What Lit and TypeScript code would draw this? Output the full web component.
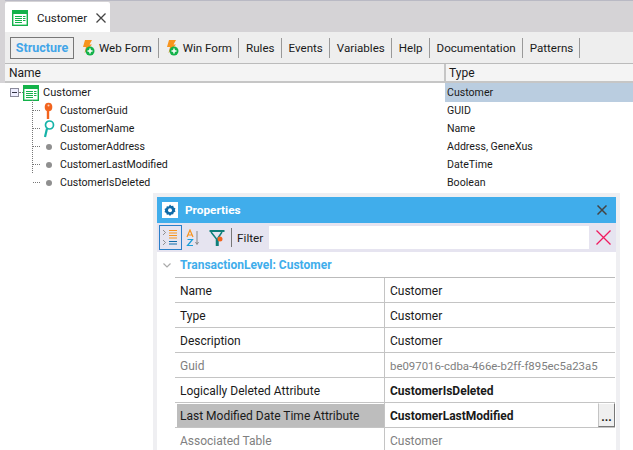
import { LitElement, html, css, svg } from 'lit';
import { customElement } from 'lit/decorators.js';

const tabs = ['Web Form', 'Win Form', 'Rules', 'Events', 'Variables', 'Help', 'Documentation', 'Patterns'];

const attrs = [
  { name: 'CustomerGuid', type: 'GUID', icon: 'pk' },
  { name: 'CustomerName', type: 'Name', icon: 'sk' },
  { name: 'CustomerAddress', type: 'Address, GeneXus', icon: 'dot' },
  { name: 'CustomerLastModified', type: 'DateTime', icon: 'dot' },
  { name: 'CustomerIsDeleted', type: 'Boolean', icon: 'dot' },
];

const props = [
  { name: 'Name', value: 'Customer' },
  { name: 'Type', value: 'Customer' },
  { name: 'Description', value: 'Customer' },
  { name: 'Guid', value: 'be097016-cdba-466e-b2ff-f895ec5a23a5', off: true, guid: true },
  { name: 'Logically Deleted Attribute', value: 'CustomerIsDeleted', bold: true },
  { name: 'Last Modified Date Time Attribute', value: 'CustomerLastModified', bold: true, selected: true },
  { name: 'Associated Table', value: 'Customer', off: true },
];

const trnIcon = html`<svg width="16" height="16" viewBox="0 0 16 16">
  <rect x="0.700" y="0.700" width="14.600" height="14.600" fill="#fff" stroke="#13b24a" stroke-width="1.400"/>
  <rect x="1" y="1" width="14" height="3" fill="#13b24a"/>
  <path d="M3 6.500h7M3 8.500h7M3 10.500h7M3 12.500h7" stroke="#13b24a"/>
  <path d="M11 6.500h2.500M11 8.500h2.500M11 10.500h2.500" stroke="#13b24a"/>
</svg>`;

const boltIcon = html`<svg width="13" height="17" viewBox="0 0 13 17">
  <path d="M3 1h7L7.500 5.500H10L2.500 14 4 8H1z" fill="#f7941d"/>
  <circle cx="8" cy="12" r="4.500" fill="#13b24a"/>
  <path d="M5.500 12h5M8 9.500v5" stroke="#fff" stroke-width="1.500"/>
</svg>`;

const keyIcon = (kind: string) => {
  if (kind === 'pk') {
    return html`<svg width="12" height="18" viewBox="0 0 12 18">
      <ellipse cx="5.500" cy="5" rx="3.800" ry="4.300" fill="#f2641e"/>
      <path d="M5 8v9" stroke="#f2641e" stroke-width="2.400"/>
      <circle cx="5.500" cy="3.500" r="1" fill="#fbd0b8"/>
    </svg>`;
  }
  if (kind === 'sk') {
    return html`<svg width="12" height="18" viewBox="0 0 12 18">
      <circle cx="6.500" cy="5" r="4" fill="none" stroke="#15b3a8" stroke-width="1.700"/>
      <path d="M4 8.500 2 17" stroke="#15b3a8" stroke-width="2.200"/>
    </svg>`;
  }
  return html`<svg width="12" height="18" viewBox="0 0 12 18"><circle cx="6" cy="9" r="3" fill="#8f8f8f"/></svg>`;
};

const gearIcon = html`<svg width="16" height="16" viewBox="0 0 16 16">
  <rect width="16" height="16" fill="#fff"/>
  <path d="M8 2.500 9.300 4l1.900-.3.500 1.900 1.800.8-.7 1.600.7 1.600-1.800.8-.5 1.900L9.300 12.500 8 14l-1.300-1.500-1.900.3-.5-1.900-1.800-.8.7-1.600-.7-1.600 1.800-.8.5-1.900 1.900.3z" fill="#0f6ba8"/>
  <circle cx="8" cy="8.200" r="2" fill="#fff"/>
</svg>`;

const lines = svg`<path d="M7 2.500h8M7 5h8M7 7.500h8M7 10h8" stroke="#f7941d" stroke-width="1.200"/>
  <path d="M7 13.500h8M7 16h8" stroke="#0f6ba8" stroke-width="1.200"/>
  <path d="M1 2l2.500 2.500L1 7M1 12l2.500 2.500L1 17" fill="none" stroke="#777" stroke-width="0.800"/>`;

@customElement('app-root')
export class AppRoot extends LitElement {
  static styles = css`
    :host {
      display: block;
      width: 633px;
      height: 450px;
      overflow: hidden;
      position: relative;
      background: #fff;
      font-family: Roboto, 'Open Sans', sans-serif;
      font-size: 10.600px;
      color: #1a1a1a;
    }
    .top {
      background: #d5d3d6;
      padding-left: 5px;
      height: 83px;
    }
    .tabstrip {
      height: 32px;
      box-sizing: border-box;
      padding-top: 1px;
      border-top: 1px solid #b9b9c4;
    }
    .tab {
      width: 105px;
      height: 30px;
      background: #fff;
      border-radius: 2px 2px 0 0;
      display: flex;
      align-items: center;
      padding: 2px 0 0 7px;
      box-sizing: border-box;
      font-size: 11.500px;
    }
    .tab span { margin: 0 9px 0 9px; }
    .toolbar {
      height: 31px;
      background: #eee;
      display: flex;
      align-items: center;
      box-sizing: border-box;
      padding-left: 5px;
      font-size: 11.600px;
    }
    .structure {
      border: 1px solid #777;
      color: #42a5e8;
      font-weight: 700;
      font-size: 12.500px;
      height: 22px;
      line-height: 20px;
      box-sizing: border-box;
      width: 64px;
      text-align: center;
      margin-right: 8px;
    }
    .tb {
      display: flex;
      align-items: center;
      gap: 4px;
      height: 20px;
      padding-right: 6px;
      margin-right: 7px;
      border-right: 1px solid #999;
      white-space: nowrap;
    }
    .head {
      height: 17px;
      display: grid;
      grid-template-columns: 439px 1fr;
      background: #f4f4f4;
      border-top: 1px solid #bbb;
      border-bottom: 2px solid #c6c6c6;
      line-height: 18px;
      font-size: 12px;
    }
    .head div { padding-left: 4px; }
    .head div + div { border-left: 2px solid #c6c6c6; padding-left: 3px; }
    .tree { position: relative; }
    .row {
      height: 18px;
      display: grid;
      grid-template-columns: 445px 1fr;
      line-height: 19px;
    }
    .row .left { display: flex; align-items: center; }
    .row .type { padding-left: 2px; }
    .root .type { background: #bacde0; }
    .root .left { padding-left: 10px; }
    .expander {
      width: 9px;
      height: 9px;
      border: 1px solid #8a8a9a;
      background: #eef;
      box-sizing: border-box;
      display: flex;
      align-items: center;
      justify-content: center;
    }
    .expander::after { content: ''; width: 5px; height: 1px; background: #334; }
    .hdots { width: 4px; border-top: 1px dotted #777; }
    .root .name { margin-left: 4px; font-size: 11px; }
    .child .left { padding-left: 33px; }
    .child .hdots { width: 7px; }
    .child .icon { display: flex; margin-left: 3px; }
    .child .name { margin-left: 5px; }
    .vline {
      position: absolute;
      left: 32px;
      top: 17px;
      height: 73px;
      border-left: 1px dotted #777;
    }
    .panel {
      position: absolute;
      left: 153px;
      top: 193px;
      width: 467px;
      height: 257px;
      box-sizing: border-box;
      padding: 4px 4px 0;
      background: #efeff2;
    }
    .inner {
      height: 253px;
      background: #fff;
    }
    .title {
      height: 26px;
      background: #40adeb;
      color: #fff;
      display: flex;
      align-items: center;
      padding: 0 9px 0 5px;
      gap: 7px;
      font-weight: 700;
      font-size: 11.800px;
    }
    .title .close { margin-left: auto; display: flex; }
    .filterbar {
      height: 29px;
      background: #e6e4f0;
      display: flex;
      align-items: center;
      box-sizing: border-box;
      padding-left: 2px;
      font-size: 11.800px;
    }
    .sortbtn {
      width: 23px;
      height: 25px;
      box-sizing: border-box;
      border: 1px solid #2a7fc9;
      display: flex;
      align-items: center;
      justify-content: center;
    }
    .sep { width: 1px; height: 19px; background: #777; margin: 0 5px 0 6px; }
    .filterinput { flex: 1; height: 23px; background: #fff; margin-left: 6px; }
    .filterbar .clear { display: flex; margin: 0 5px 0 7px; }
    .filterbar .az { display: flex; margin-left: 4px; }
    .filterbar .fn { display: flex; margin-left: 7px; }
    .group {
      height: 25px;
      display: flex;
      align-items: center;
      gap: 9px;
      padding: 1px 0 0 6px;
      box-sizing: border-box;
      color: #40adeb;
      font-weight: 700;
      font-size: 12px;
    }
    .grid { margin-left: 18px; margin-right: 1px; border-top: 1px solid #bbb; }
    .prop {
      display: grid;
      grid-template-columns: 209px 1fr;
      height: 25px;
      box-sizing: border-box;
      border-bottom: 1px solid #c4c4c4;
      line-height: 26px;
      font-size: 12px;
      position: relative;
    }
    .prop > div { padding-left: 5px; }
    .prop > div + div { border-left: 1px solid #c4c4c4; padding-left: 5px; }
    .prop.off { color: #808080; }
    .prop.guid .val { font-size: 11.400px; }
    .prop.bold .val { font-weight: 700; }
    .prop.sel .lbl { background: #bdbdbd; margin: 1px 0 0 2px; padding-left: 3px; height: 23px; line-height: 24px; }
    .dots {
      position: absolute;
      right: 0;
      top: 0;
      width: 17px;
      height: 24px;
      background: #efefef;
      border: 1px solid #fff;
      border-right-color: #777;
      border-bottom-color: #777;
      box-sizing: border-box;
      font-weight: 700;
      text-align: center;
      line-height: 26px;
      padding: 0 !important;
    }
  `;

  render() {
    return html`
      <div class="top">
        <div class="tabstrip">
          <div class="tab">
            ${trnIcon}
            <span>Customer</span>
            <svg width="10" height="10" viewBox="0 0 10 10"><path d="M0.500 0.500l9 9M9.500 0.500l-9 9" stroke="#444" stroke-width="1.300"/></svg>
          </div>
        </div>
        <div class="toolbar">
          <div class="structure">Structure</div>
          ${tabs.map((t, i) => html`<div class="tb">${i < 2 ? boltIcon : ''}<span>${t}</span></div>`)}
        </div>
        <div class="head"><div>Name</div><div>Type</div></div>
      </div>
      <div class="tree">
        <div class="vline"></div>
        <div class="row root">
          <div class="left">
            <div class="expander"></div><div class="hdots"></div>${trnIcon}<span class="name">Customer</span>
          </div>
          <div class="type">Customer</div>
        </div>
        ${attrs.map(
          (a) => html`<div class="row child">
            <div class="left">
              <div class="hdots"></div><div class="icon">${keyIcon(a.icon)}</div><span class="name">${a.name}</span>
            </div>
            <div class="type">${a.type}</div>
          </div>`
        )}
      </div>
      <div class="panel">
        <div class="inner">
          <div class="title">
            ${gearIcon}
            <span>Properties</span>
            <span class="close"><svg width="10" height="10" viewBox="0 0 10 10"><path d="M0.500 0.500l9 9M9.500 0.500l-9 9" stroke="#444" stroke-width="1.500"/></svg></span>
          </div>
          <div class="filterbar">
            <div class="sortbtn"><svg width="17" height="19" viewBox="0 0 17 19">${lines}</svg></div>
            <span class="az"><svg width="16" height="18" viewBox="0 0 16 18">
              <path d="M1 8 4 1l3 7M2 6h4" fill="none" stroke="#f7941d" stroke-width="1.200"/>
              <path d="M1.500 10.500h5l-5 6h5.500" fill="none" stroke="#1a9fd8" stroke-width="1.200"/>
              <path d="M11 2v13M9.500 13l1.500 2.500 1.500-2.500" fill="none" stroke="#888" stroke-width="1"/>
            </svg></span>
            <span class="fn"><svg width="16" height="18" viewBox="0 0 16 18">
              <path d="M2 3 7.500 10v7M13 3 9 9v8" fill="none" stroke="#0f7f7a" stroke-width="1.500"/>
              <path d="M0.500 2h15" stroke="#0f7f7a" stroke-width="2"/>
              <circle cx="11" cy="10" r="2.500" fill="#f2641e"/>
            </svg></span>
            <div class="sep"></div>
            <span>Filter</span>
            <div class="filterinput"></div>
            <span class="clear"><svg width="15" height="15" viewBox="0 0 15 15"><path d="M0.500 0.500l14 14M14.500 0.500l-14 14" stroke="#f0195f" stroke-width="1.300"/></svg></span>
          </div>
          <div class="group">
            <svg width="8" height="5" viewBox="0 0 8 5"><path d="M0.500 0.500l3.500 3.500 3.500-3.500" fill="none" stroke="#aaa" stroke-width="1.200"/></svg>
            <span>TransactionLevel: Customer</span>
          </div>
          <div class="grid">
            ${props.map(
              (p) => html`<div class="prop ${p.off ? 'off' : ''} ${p.guid ? 'guid' : ''} ${p.bold ? 'bold' : ''} ${p.selected ? 'sel' : ''}">
                <div class="lbl">${p.name}</div>
                <div class="val">${p.value}</div>
                ${p.selected ? html`<div class="dots">...</div>` : ''}
              </div>`
            )}
          </div>
        </div>
      </div>
    `;
  }
}
